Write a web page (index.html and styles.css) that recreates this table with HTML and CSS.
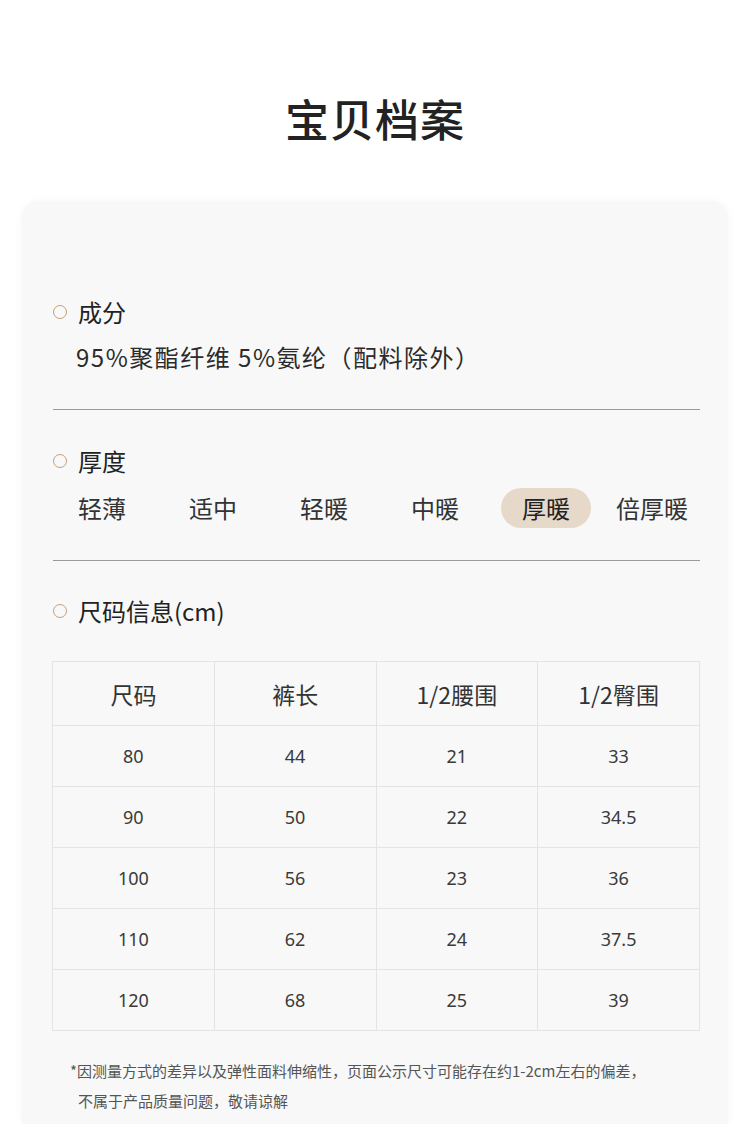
FILE: index.html
```html
<!DOCTYPE html>
<html lang="zh-CN">
<head>
<meta charset="utf-8">
<link rel="stylesheet" href="styles.css">
</head>
<body>
<div class="page">
  <h1 class="title">宝贝档案</h1>
  <div class="card">
    <section class="sec sec-first">
      <div class="heading"><span class="dot"></span>成分</div>
      <div class="comp">95%聚酯纤维 5%氨纶（配料除外）</div>
    </section>
    <div class="divider"></div>
    <section class="sec">
      <div class="heading"><span class="dot"></span>厚度</div>
      <div class="options">
        <span class="opt">轻薄</span>
        <span class="opt">适中</span>
        <span class="opt">轻暖</span>
        <span class="opt">中暖</span>
        <span class="opt active">厚暖</span>
        <span class="opt last">倍厚暖</span>
      </div>
    </section>
    <div class="divider div2"></div>
    <section class="sec">
      <div class="heading"><span class="dot"></span>尺码信息(cm)</div>
      <table class="sizes">
        <thead>
          <tr><th>尺码</th><th>裤长</th><th>1/2腰围</th><th>1/2臀围</th></tr>
        </thead>
        <tbody>
          <tr><td>80</td><td>44</td><td>21</td><td>33</td></tr>
          <tr><td>90</td><td>50</td><td>22</td><td>34.5</td></tr>
          <tr><td>100</td><td>56</td><td>23</td><td>36</td></tr>
          <tr><td>110</td><td>62</td><td>24</td><td>37.5</td></tr>
          <tr><td>120</td><td>68</td><td>25</td><td>39</td></tr>
        </tbody>
      </table>
      <div class="note">
        <div class="note-line">*因测量方式的差异以及弹性面料伸缩性，页面公示尺寸可能存在约1-2cm左右的偏差，</div>
        <div class="note-line indent">不属于产品质量问题，敬请谅解</div>
      </div>
    </section>
  </div>
</div>
</body>
</html>
```
FILE: styles.css
```css
html, body {
  margin: 0;
  padding: 0;
  background: #ffffff;
}
body {
  font-family: "Noto Sans CJK SC", "Noto Sans", sans-serif;
  color: #2b2b2b;
  overflow: hidden;
  height: 1124px;
}
.page {
  width: 750px;
  height: 1124px;
  overflow: hidden;
}
.title {
  margin: 0;
  padding-top: 89px;
  height: 201px;
  box-sizing: border-box;
  text-align: center;
  font-size: 44px;
  line-height: 58px;
  font-weight: 500;
  letter-spacing: 1px;
  color: #222;
}
.card {
  margin: 0 22px;
  background: #f8f8f8;
  border-radius: 16px 16px 0 0;
  box-shadow: 0 0 10px rgba(0, 0, 0, 0.035);
  padding: 95px 28px 0 31px;
  height: 923px;
  box-sizing: border-box;
}
.heading {
  display: flex;
  align-items: center;
  gap: 11px;
  font-size: 24px;
  line-height: 32px;
  color: #222;
}
.dot {
  width: 12px;
  height: 12px;
  border: 1.5px solid #c49f78;
  border-radius: 50%;
  flex: none;
}
.comp {
  margin-top: 13px;
  padding-left: 23px;
  font-size: 24px;
  line-height: 32px;
  letter-spacing: 1.5px;
  color: #2b2b2b;
  white-space: nowrap;
}
.divider {
  height: 1px;
  background: #9a9a9a;
  margin: 36px 0 35px;
}
.div2 {
  margin: 32px 0 34px;
}
.options {
  margin-top: 11px;
  margin-left: 4px;
  display: flex;
  align-items: center;
  gap: 21px;
}
.opt {
  flex: none;
  white-space: nowrap;
  height: 40px;
  line-height: 40px;
  padding: 0 21px;
  font-size: 24px;
  color: #333;
  border-radius: 20px;
}
.opt.active {
  background: #e6d9c9;
  color: #222;
}
.opt.last {
  padding-left: 4px;
}
.sizes {
  margin-top: 34px;
  width: 648px;
  margin-left: -1px;
  border-collapse: collapse;
  table-layout: fixed;
}
.sizes th, .sizes td {
  border: 1px solid #e4e4e4;
  text-align: center;
  padding: 0;
  color: #333;
}
.sizes th {
  height: 63px;
  font-size: 23px;
  font-weight: 400;
}
.sizes td {
  height: 60px;
  font-size: 18px;
  font-family: "Noto Sans", "Noto Sans CJK SC", sans-serif;
  color: #3a3a3a;
}
.note {
  margin-top: 25px;
  padding-left: 17px;
  font-size: 15px;
  line-height: 30px;
  color: #555;
  white-space: nowrap;
}
.indent {
  padding-left: 8px;
}
```
